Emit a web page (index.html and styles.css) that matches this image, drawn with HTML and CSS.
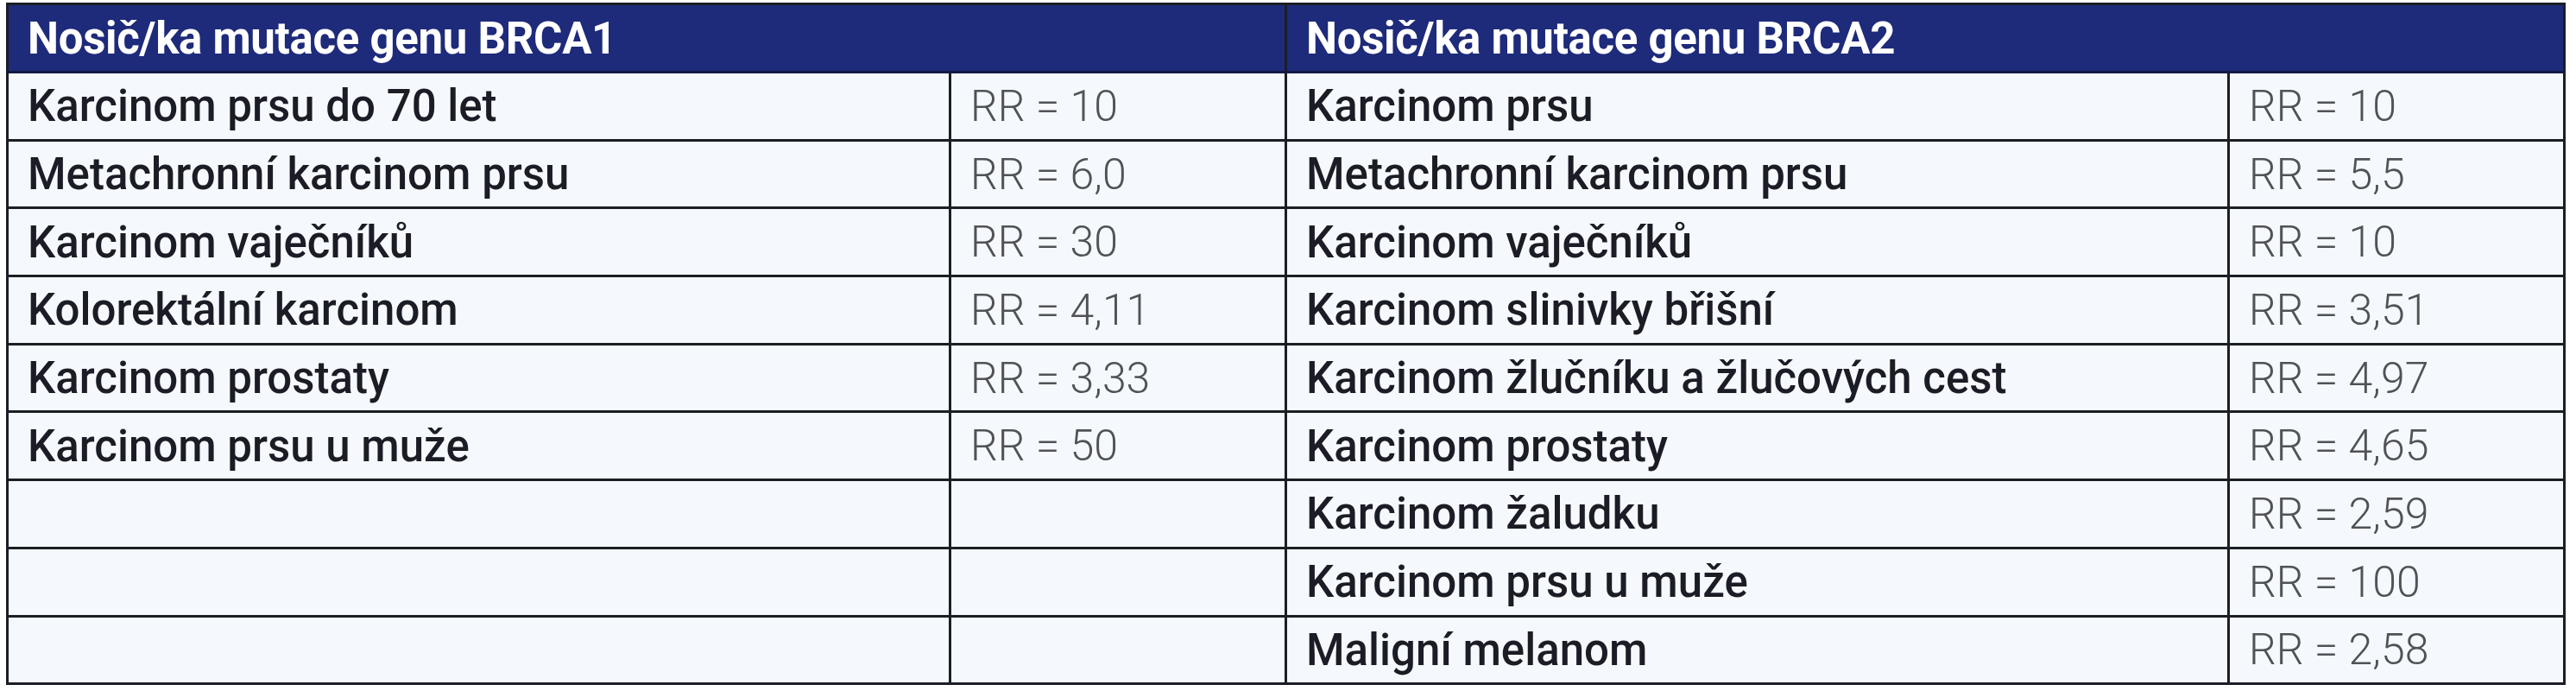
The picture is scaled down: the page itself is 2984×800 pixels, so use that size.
FILE: index.html
```html
<!DOCTYPE html>
<html lang="cs">
<head>
<meta charset="utf-8">
<title>BRCA1 / BRCA2</title>
<link rel="stylesheet" href="styles.css">
</head>
<body>
<table class="risk">
  <colgroup>
    <col class="c-label">
    <col class="c-val">
    <col class="c-label">
    <col class="c-val">
  </colgroup>
  <thead>
    <tr class="head">
      <th colspan="2">Nosič/ka mutace genu BRCA1</th>
      <th colspan="2">Nosič/ka mutace genu BRCA2</th>
    </tr>
  </thead>
  <tbody>
    <tr><td class="lbl">Karcinom prsu do 70 let</td><td class="val">RR = 10</td><td class="lbl">Karcinom prsu</td><td class="val">RR = 10</td></tr>
    <tr><td class="lbl">Metachronní karcinom prsu</td><td class="val">RR = 6,0</td><td class="lbl">Metachronní karcinom prsu</td><td class="val">RR = 5,5</td></tr>
    <tr><td class="lbl">Karcinom vaječníků</td><td class="val">RR = 30</td><td class="lbl">Karcinom vaječníků</td><td class="val">RR = 10</td></tr>
    <tr><td class="lbl">Kolorektální karcinom</td><td class="val">RR = 4,11</td><td class="lbl">Karcinom slinivky břišní</td><td class="val">RR = 3,51</td></tr>
    <tr><td class="lbl">Karcinom prostaty</td><td class="val">RR = 3,33</td><td class="lbl">Karcinom žlučníku a žlučových cest</td><td class="val">RR = 4,97</td></tr>
    <tr><td class="lbl">Karcinom prsu u muže</td><td class="val">RR = 50</td><td class="lbl">Karcinom prostaty</td><td class="val">RR = 4,65</td></tr>
    <tr><td class="lbl"></td><td class="val"></td><td class="lbl">Karcinom žaludku</td><td class="val">RR = 2,59</td></tr>
    <tr><td class="lbl"></td><td class="val"></td><td class="lbl">Karcinom prsu u muže</td><td class="val">RR = 100</td></tr>
    <tr><td class="lbl"></td><td class="val"></td><td class="lbl">Maligní melanom</td><td class="val">RR = 2,58</td></tr>
  </tbody>
</table>
</body>
</html>
```
FILE: styles.css
```css
html, body {
  background: #ffffff;
}
body {
  margin: 3px 0 0 7px;
  font-family: Roboto, "Liberation Sans", sans-serif;
}
.risk {
  border-collapse: collapse;
  table-layout: fixed;
  width: 2962px;
  background: #f5f9fd;
}
.c-label { width: 1092px; }
.c-val { width: 389px; }
.risk th,
.risk td {
  border: 3px solid #1b1e24;
  padding: 0 0 0 22px;
  text-align: left;
  vertical-align: middle;
  white-space: nowrap;
  overflow: hidden;
}
.head th {
  height: 76px;
  background: #1e2a7a;
  color: #ffffff;
  font-size: 51px;
  font-weight: 700;
  letter-spacing: -0.3px;
  border-bottom-color: #141a44;
}
.risk tbody tr {
  height: 78.7px;
}
.lbl {
  color: #1b1c26;
  font-size: 51px;
  font-weight: 500;
}
.val {
  color: #505256;
  font-size: 50px;
  font-weight: 300;
}
```
